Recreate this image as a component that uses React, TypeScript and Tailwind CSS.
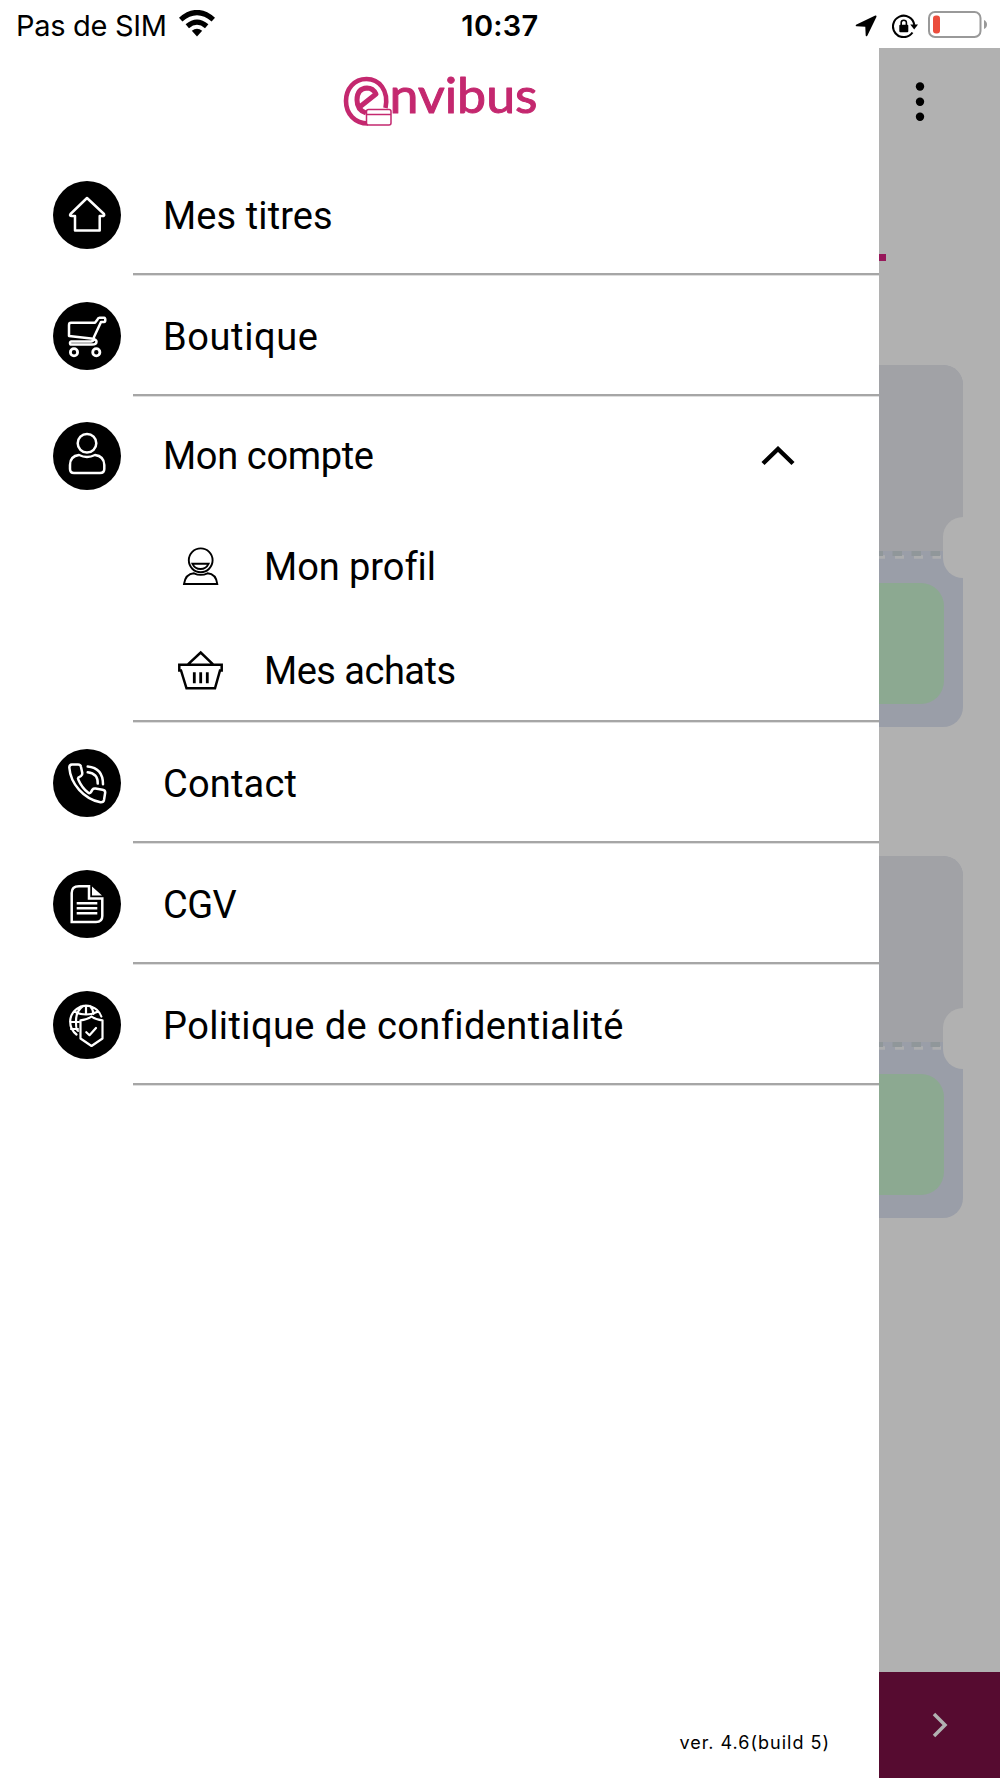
import React from "react";

interface MenuRowProps {
  label: string;
  tracking: string;
  icon: React.ReactNode;
}

function RoundIcon({ children }: { children: React.ReactNode }) {
  return (
    <svg
      className="w-[68px] h-[68px] ml-[53px] shrink-0"
      viewBox="0 0 68 68"
      fill="none"
      stroke="white"
      strokeWidth="2.5"
      strokeLinejoin="round"
      strokeLinecap="round"
    >
      <circle cx="34" cy="34" r="34" fill="black" stroke="none" />
      {children}
    </svg>
  );
}

const homeIcon = <path d="M34 17 51 33Q52 35 49 35H46.7V49.5H22V35H19Q16 35 17.500 33Z" />;

const cartIcon = (
  <g>
    <path d="M42 20.800H18Q16 20.800 16 23V34L38 36.500Q43.500 37.200 43.500 39.500Q43.500 42.600 39 42.600H18.500Q17 42.600 17 41T18.500 39.600H38Q41 39.400 41 35L48 20H51Q52.300 20 52.300 18T51 15.800H46.500Q45 15.800 44.500 17.500Z" />
    <circle cx="21" cy="50.300" r="3.600" strokeWidth="2.800" />
    <circle cx="43.300" cy="50.300" r="3.600" strokeWidth="2.800" />
  </g>
);

const accountIcon = (
  <g>
    <circle cx="34" cy="21.300" r="9.300" />
    <path d="M26 33Q17 34 17 43V47Q17 51 21 51H47Q51.300 51 51.300 47V43Q51 34 42 33Q34 37 26 33Z" />
  </g>
);

const phoneIcon = (
  <g>
    <path d="M19 15.500H25Q27.700 15.500 28 18L29.300 24Q29.500 26 28 27L25.500 28.500Q24.500 29.500 25.500 31Q29 39 35 43.500Q37 45 38 43L39.500 40.500Q40.500 39.300 42.500 39.600L49.500 40.800Q52.300 41.300 52.200 43.500L51 51Q50.500 53.500 47.500 53.300C31 50 17.500 35 16.300 18.500Q16.300 15.700 19 15.500Z" />
    <path d="M34.700 17.500Q50 19 50 35.300M34.700 23.300Q45 24.500 44.700 34.600" />
  </g>
);

const documentIcon = (
  <g strokeLinejoin="miter" strokeLinecap="butt">
    <path d="M36 16.300H26Q18.700 16.300 18.700 23V52H43Q49.300 52 49.300 46V28.400H36Z" />
    <path d="M39 16.500V25.400H49Z" fill="white" stroke="none" />
    <path d="M23.700 33.300H44.300M23.700 38.300H44.300M23.700 43.300H44.300" />
  </g>
);

const privacyIcon = (
  <g strokeWidth="2.200">
    <path d="M23.500 43.500A16 16 0 1 1 48.300 25.500M30 15Q23 20 23 30T25 40M33 15V23.500M37 15Q40 18 40.500 23M21 20.500Q33 26.500 45.300 20.500M17 31H26M18 38H25" />
    <path d="M38.500 25.500Q43 29 49.500 29.300V47.500L38.500 55 27.500 47.500V29.300Q34 29 38.500 25.500Z" fill="black" />
    <path d="M33.300 41.200 36.500 44.200 43 37" />
  </g>
);

function MenuLabel({ children, tracking }: { children: string; tracking: string }) {
  return <span className={`text-[38px] leading-none whitespace-nowrap ${tracking}`}>{children}</span>;
}

function MenuRow({ label, tracking, icon }: MenuRowProps) {
  return (
    <li className="h-[121px] flex flex-col">
      <div className="flex-1 flex items-center gap-[42px] pt-[2px]">
        <RoundIcon>{icon}</RoundIcon>
        <div className="pt-[3px] flex">
          <MenuLabel tracking={tracking}>{label}</MenuLabel>
        </div>
      </div>
      <div className="ml-[133px] h-[2px] bg-[#a6a6a6] shadow-[0_1px_#dedede]" />
    </li>
  );
}

function StatusBar() {
  return (
    <header className="h-12 shrink-0 bg-white grid grid-cols-3 items-center font-['Inter'] text-[29px] leading-none">
      <div className="flex items-center gap-[12px] pl-[16px] pt-[3px]">
        <span className="tracking-[-0.3px] whitespace-nowrap">Pas de SIM</span>
        <svg className="w-[36px] h-[27px] -mt-[5px]" viewBox="0 0 36 27">
          <path d="M18 26.500 12.800 20.800Q18 16.800 23.200 20.800Z" />
          <path d="M8.300 16.300Q18 8 27.700 16.300" fill="none" stroke="black" strokeWidth="5.200" />
          <path d="M1.700 9.600Q18 -4.500 34.300 9.600" fill="none" stroke="black" strokeWidth="5.200" />
        </svg>
      </div>
      <div className="text-center font-semibold tracking-[0.3px] pt-[3px]">10:37</div>
      <div className="flex items-center justify-end pr-[12px]">
        <svg className="w-[22px] h-[22px] mr-[15px] mt-[3px]" viewBox="0 0 22 22">
          <path d="M20.300 .5 1 9.700Q0 11.300 1.500 11.300L10.300 11.700 10.700 20.500Q11 22 12.300 20.800L21.500 1.800Q21.700 .2 20.300 .5Z" />
        </svg>
        <svg className="w-[26px] h-[24px] mr-[10px] mt-[3px]" viewBox="0 0 26 24" fill="none" stroke="black" strokeWidth="2.100">
          <path d="M20.500 18.500A10.700 10.700 0 1 1 22.300 11" />
          <path d="M18.300 10.500H26L22.200 15.500Z" fill="black" stroke="none" />
          <rect x="7.300" y="10.700" width="9" height="7.500" rx="1" fill="black" stroke="none" />
          <path d="M9.200 11V8.700Q9.200 6.300 11.800 6.300T14.400 8.700V11" strokeWidth="1.600" />
        </svg>
        <svg className="w-[60px] h-[27px] mt-px" viewBox="0 0 60 27">
          <rect x="1" y="1" width="51.500" height="25" rx="6" fill="none" stroke="#999" strokeWidth="2" />
          <rect x="5" y="4.500" width="7" height="18" rx="3" fill="#eb4d3d" />
          <path d="M56 9Q59 10.500 59 13.500T56 18Z" fill="#999" />
        </svg>
      </div>
    </header>
  );
}

function Logo() {
  return (
    <svg className="w-[210px] h-[70px] ml-[340px] mt-[18px]" viewBox="0 -6 210 70" fill="none" stroke="#c4286f">
      <path d="M45.500 36C49 18 39 7 26.500 7C14 7 6 17 6 29C6 42 15 51.500 28 51.500" strokeWidth="4.600" />
      <path d="M19 35.500 36 22Q33 16 27 16Q17 16.500 17 28Q17 38 26 41" strokeWidth="5" strokeLinejoin="round" />
      <rect x="26.500" y="37.500" width="24.500" height="15.500" rx="2" fill="white" strokeWidth="1.500" />
      <path d="M27 42.500H51" strokeWidth="1.500" />
      <text
        x="49.500"
        y="40.500"
        textLength="148"
        lengthAdjust="spacingAndGlyphs"
        fontFamily="Lato"
        fontSize="48"
        fill="#c4286f"
        strokeWidth="1"
        strokeLinejoin="round"
      >
        nvibus
      </text>
    </svg>
  );
}

function Drawer() {
  return (
    <nav className="w-[879px] shrink-0 bg-white flex flex-col font-['Roboto']">
      <div className="h-[106px] shrink-0">
        <Logo />
      </div>
      <ul>
        <MenuRow label="Mes titres" tracking="tracking-[0.1px]" icon={homeIcon} />
        <MenuRow label="Boutique" tracking="tracking-[0.6px]" icon={cartIcon} />
        <li>
          <div className="h-[120px] flex items-center gap-[42px]">
            <RoundIcon>{accountIcon}</RoundIcon>
            <MenuLabel tracking="tracking-[-0.35px]">Mon compte</MenuLabel>
            <svg className="w-[34px] h-[20px] ml-auto mr-[84px]" viewBox="0 0 34 20">
              <path d="M2 17.500 17 3 32 17.500" fill="none" stroke="black" strokeWidth="4.400" />
            </svg>
          </div>
          <div className="h-[102px] flex items-center gap-[41px] pl-[178px]">
            <svg className="w-[45px] h-[42px] -mt-[2px]" viewBox="0 0 45 42" fill="none" stroke="black" strokeWidth="1.900">
              <circle cx="22.700" cy="15.300" r="11.900" />
              <path d="M14.500 18.800H30.500Q28 24 22.500 24T14.500 18.800Z" />
              <path d="M16 28.300Q22.700 31.500 29.500 28.300Q38 29 39.300 39H6Q7.500 29 16 28.300Z" />
            </svg>
            <MenuLabel tracking="tracking-[-0.05px]">Mon profil</MenuLabel>
          </div>
          <div className="h-[102px] flex items-center gap-[41px] pl-[178px] pt-[4px]">
            <svg className="w-[45px] h-[41px] -mt-[2px]" viewBox="0 0 45 41" fill="none" stroke="black" strokeWidth="2.500">
              <path d="M1.300 14.700H43.700V20.500H42L37 38.300H8.500L3 20.500H1.300ZM9.700 14.700 22.700 2.500 35.300 14.700" />
              <path d="M16.300 22.300V33.300M22.700 22.300V33.300M29.300 22.300V33.300" strokeWidth="2.800" />
            </svg>
            <MenuLabel tracking="tracking-[-0.5px]">Mes achats</MenuLabel>
          </div>
          <div className="ml-[133px] h-[2px] bg-[#a6a6a6] shadow-[0_1px_#dedede]" />
        </li>
        <MenuRow label="Contact" tracking="tracking-[0.2px]" icon={phoneIcon} />
        <MenuRow label="CGV" tracking="tracking-[-0.6px]" icon={documentIcon} />
        <MenuRow label="Politique de confidentialité" tracking="tracking-[0.4px]" icon={privacyIcon} />
      </ul>
      <p className="mt-auto mb-[24px] pr-[49px] text-right font-['Inter'] text-[18px] leading-[22px] tracking-[1px]">
        ver. 4.6(build 5)
      </p>
    </nav>
  );
}

function TicketCard() {
  return (
    <div className="relative w-[84px] h-[362px] rounded-r-[20px] overflow-hidden bg-[#9a9ea8] flex flex-col">
      <div className="h-[186px] bg-[#a1a2a6]" />
      <svg className="w-[62px] h-[8px]" viewBox="0 0 62 8">
        <path d="M0 6H6M16 6H25M35 6H44M53.500 6H62" stroke="#acadae" strokeWidth="3.500" />
        <path d="M0 2.500H4M13.500 2.500H23M32.500 2.500H42M51.500 2.500H61" stroke="#90979a" strokeWidth="5" />
      </svg>
      <div className="mt-[24px] w-[65px] h-[121px] rounded-r-[23px] bg-[#8ca991]" />
      <div className="absolute right-0 top-[152px] w-[20px] h-[61px] rounded-l-[20px] bg-[#b1b1b1]" />
    </div>
  );
}

function DimmedPage() {
  return (
    <div className="flex-1 bg-[#b1b1b1] flex flex-col">
      <svg className="w-[10px] h-[40px] ml-[36px] mt-[34px]" viewBox="0 0 10 40">
        <circle cx="5" cy="4.500" r="4.200" />
        <circle cx="5" cy="19.700" r="4.200" />
        <circle cx="5" cy="34.800" r="4.200" />
      </svg>
      <div className="mt-[132px] w-[7px] h-[7px] bg-[#97175a]" />
      <div className="mt-[104px] flex flex-col gap-[129px]">
        <TicketCard />
        <TicketCard />
      </div>
      <div className="mt-auto h-[106px] bg-[#560b30] flex items-center pl-[53px]">
        <svg className="w-[16px] h-[26px]" viewBox="0 0 16 26">
          <path d="M2 2 13 13 2 24" fill="none" stroke="#b1b1b1" strokeWidth="3.500" />
        </svg>
      </div>
    </div>
  );
}

export default function App() {
  return (
    <div className="w-[1000px] h-[1778px] flex flex-col bg-white text-black overflow-hidden">
      <StatusBar />
      <main className="flex-1 flex">
        <Drawer />
        <DimmedPage />
      </main>
    </div>
  );
}
